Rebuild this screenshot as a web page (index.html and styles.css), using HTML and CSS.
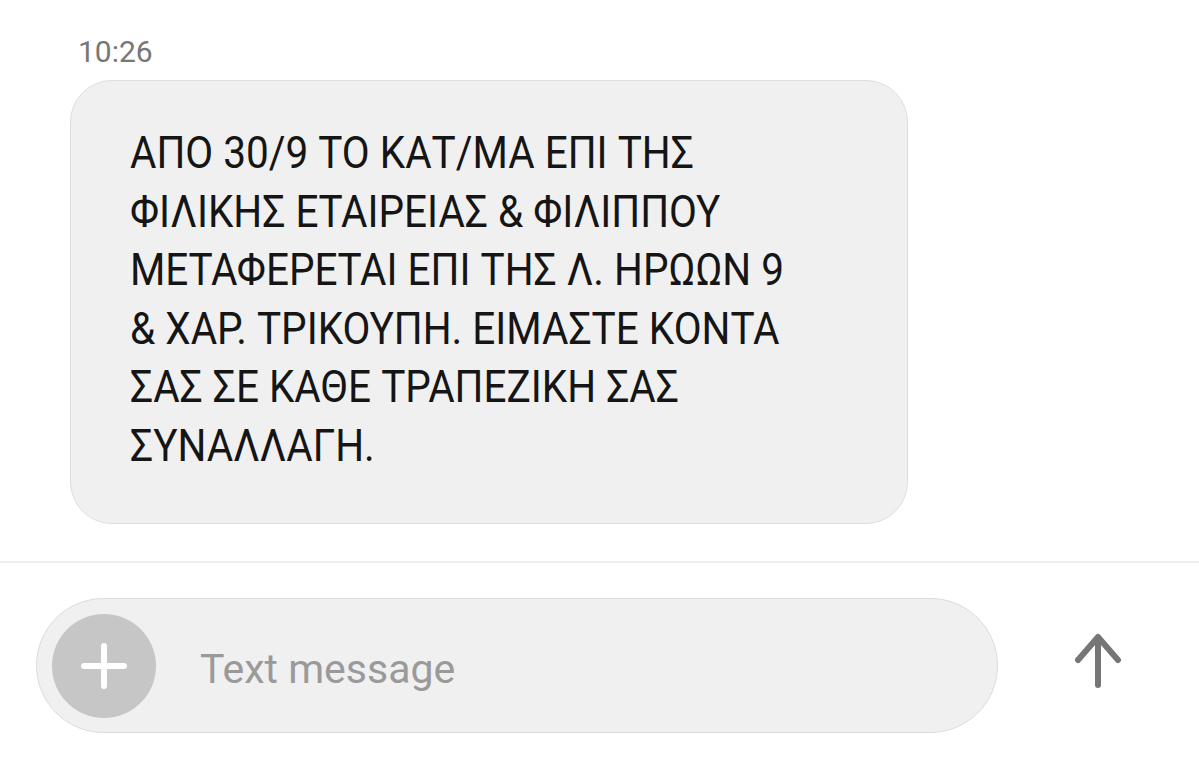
FILE: index.html
```html
<!DOCTYPE html>
<html lang="en">
  <head>
    <meta charset="UTF-8" />
    <meta name="viewport" content="width=device-width, initial-scale=1.0" />
    <title>Messages</title>
    <link rel="stylesheet" href="styles.css">
  </head>
  <body>
    <main class="thread">
      <p class="time">10:26</p>
      <div class="bubble">
        <p>
          ΑΠΟ 30/9 ΤΟ ΚΑΤ/ΜΑ ΕΠΙ ΤΗΣ<br>
          ΦΙΛΙΚΗΣ ΕΤΑΙΡΕΙΑΣ &amp; ΦΙΛΙΠΠΟΥ<br>
          ΜΕΤΑΦΕΡΕΤΑΙ ΕΠΙ ΤΗΣ Λ. ΗΡΩΩΝ 9<br>
          &amp; ΧΑΡ. ΤΡΙΚΟΥΠΗ. ΕΙΜΑΣΤΕ ΚΟΝΤΑ<br>
          ΣΑΣ ΣΕ ΚΑΘΕ ΤΡΑΠΕΖΙΚΗ ΣΑΣ<br>
          ΣΥΝΑΛΛΑΓΗ.
        </p>
      </div>
    </main>
    <footer class="composer">
      <div class="field">
        <span class="add">
          <svg width="46" height="46" viewBox="0 0 46 46">
            <path d="M23 3 V43 M3 23 H43" stroke="#fff" stroke-width="6" stroke-linecap="round" fill="none"/>
          </svg>
        </span>
        <span class="placeholder">Text message</span>
      </div>
      <span class="send">
        <svg width="50" height="58" viewBox="0 0 50 58">
          <path d="M25 52 V5 M5 27 L25 4 L45 27" stroke="#767676" stroke-width="6" stroke-linecap="round" stroke-linejoin="round" fill="none"/>
        </svg>
      </span>
    </footer>
  </body>
</html>
```

FILE: styles.css
```css
body {
  margin: 0;
  background: #fff;
  font-family: Roboto, "Noto Sans", sans-serif;
}
.thread {
  padding: 34px 0 0 70px;
  height: 527px;
  border-bottom: 2px solid #efefef;
}
.time {
  margin: 0 0 10px 8px;
  font-size: 30px;
  color: #777;
  line-height: 36px;
}
.bubble {
  box-sizing: border-box;
  width: 838px;
  height: 444px;
  background: #f0f0f0;
  border: 1px solid #dedede;
  border-radius: 42px;
  padding: 43px 0 0 59px;
}
.bubble p {
  margin: 0;
  font-size: 45px;
  line-height: 58.5px;
  color: #151515;
  white-space: nowrap;
  transform: scaleX(0.9);
  transform-origin: left top;
}
.composer {
  display: flex;
  align-items: center;
  padding: 35px 0 0 36px;
}
.field {
  box-sizing: border-box;
  width: 962px;
  height: 135px;
  display: flex;
  align-items: center;
  background: #f0f0f0;
  border: 1px solid #dcdcdc;
  border-radius: 68px;
  padding-left: 15px;
}
.add {
  width: 104px;
  height: 104px;
  border-radius: 50%;
  background: #c6c6c6;
  display: flex;
  align-items: center;
  justify-content: center;
}
.placeholder {
  margin: 6px 0 0 44px;
  font-size: 41px;
  color: #9a9a9a;
}
.send {
  margin: -8px 0 0 75px;
  display: flex;
}
```
